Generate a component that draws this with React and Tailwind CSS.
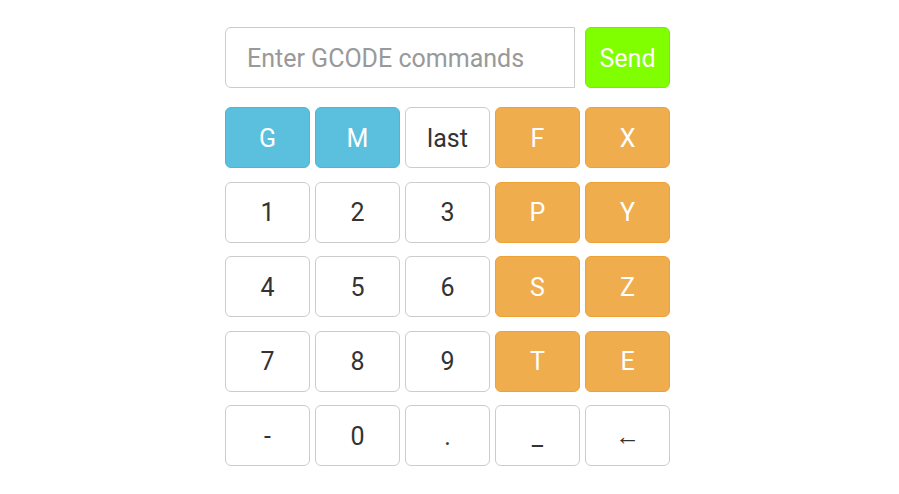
import { useState } from "react";

const rows = [
  [
    { label: "G", kind: "info" },
    { label: "M", kind: "info" },
    { label: "last", kind: "plain" },
    { label: "F", kind: "warn" },
    { label: "X", kind: "warn" },
  ],
  [
    { label: "1", kind: "plain" },
    { label: "2", kind: "plain" },
    { label: "3", kind: "plain" },
    { label: "P", kind: "warn" },
    { label: "Y", kind: "warn" },
  ],
  [
    { label: "4", kind: "plain" },
    { label: "5", kind: "plain" },
    { label: "6", kind: "plain" },
    { label: "S", kind: "warn" },
    { label: "Z", kind: "warn" },
  ],
  [
    { label: "7", kind: "plain" },
    { label: "8", kind: "plain" },
    { label: "9", kind: "plain" },
    { label: "T", kind: "warn" },
    { label: "E", kind: "warn" },
  ],
  [
    { label: "-", kind: "plain" },
    { label: "0", kind: "plain" },
    { label: ".", kind: "plain" },
    { label: "_", kind: "plain" },
    { label: "←", kind: "plain" },
  ],
];

const kinds = {
  info: "bg-[#5bc0de] border-[#46b8da] text-white",
  warn: "bg-[#f0ad4e] border-[#eea236] text-white",
  plain: "bg-white border-[#cccccc] text-[#333333]",
};

export default function App() {
  const [cmd, setCmd] = useState("");

  function press(label) {
    if (label === "←") {
      setCmd(c => c.slice(0, -1));
    } else if (label === "last") {
      // nothing stored yet
    } else {
      setCmd(c => c + label);
    }
  }

  return (
    <div className="w-[899px] h-[494px] bg-white pl-[225px] font-['Roboto',sans-serif]">
      <div className="w-[445px] pt-[27px]">
        <div className="flex gap-[10px] mb-[19px]">
          <input
            value={cmd}
            onChange={e => setCmd(e.target.value)}
            placeholder="Enter GCODE commands"
            className="w-[350px] h-[61px] border border-[#cccccc] rounded-l-[6px] px-[21px] pt-[2px] text-[25px] text-[#555555] placeholder:text-[#999999] outline-none"
          />
          <button className="w-[85px] h-[61px] pt-[2px] rounded-[6px] bg-[#7fff00] border border-[#76ec00] text-white text-[25px]">
            Send
          </button>
        </div>

        <div className="flex flex-col gap-[13.5px]">
          {rows.map((row, i) => (
            <div key={i} className="grid grid-cols-5 gap-[5px]">
              {row.map(b => (
                <button
                  key={b.label}
                  onClick={() => press(b.label)}
                  className={"h-[61px] pt-[2px] rounded-[6px] border text-[25px] " + kinds[b.kind]}
                >
                  {b.label}
                </button>
              ))}
            </div>
          ))}
        </div>
      </div>
    </div>
  );
}
